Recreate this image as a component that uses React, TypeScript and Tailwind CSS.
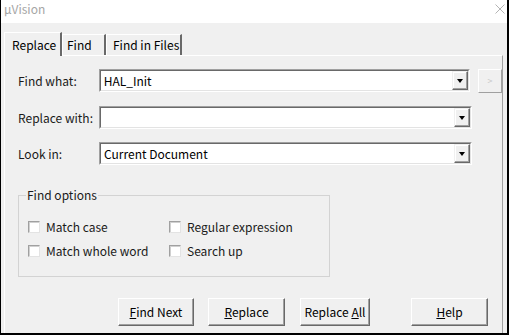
import React from 'react';

const font = "font-['Noto_Sans_CJK_SC','Microsoft_YaHei',sans-serif]";

const Arrow = () => (
  <div className="flex h-full w-[16px] items-center justify-center border border-t-[#f0f0f0] border-l-[#f0f0f0] border-r-[#696969] border-b-[#696969] bg-[#f0f0f0] shadow-[inset_-1px_-1px_0_#a0a0a0,inset_1px_1px_0_#ffffff]">
    <div className="h-0 w-0 border-l-[3px] border-r-[3px] border-t-[4px] border-l-transparent border-r-transparent border-t-black" />
  </div>
);

const Combo = ({ value }: { value?: string }) => (
  <div className="flex h-[23px] w-[373px] border border-t-[#a0a0a0] border-l-[#a0a0a0] border-r-white border-b-white">
    <div className="flex flex-1 border border-t-[#696969] border-l-[#696969] border-r-[#e3e3e3] border-b-[#e3e3e3] bg-white">
      <span className="flex-1 pl-[3px] text-[12px] leading-[19px] text-black">{value}</span>
      <Arrow />
    </div>
  </div>
);

const Row = ({ label, value, extra }: { label: string; value?: string; extra?: boolean }) => (
  <div className="flex items-start">
    <div className="w-[81px] text-[12px] leading-[23px] text-[#1a1a1a]">{label}</div>
    <Combo value={value} />
    {extra && (
      <div className="ml-[8px] flex h-[24px] w-[24px] items-center justify-center border border-t-white border-l-white border-r-[#a0a0a0] border-b-[#a0a0a0] text-[9px] text-[#c8c8c8]">
        &gt;
      </div>
    )}
  </div>
);

const Check = ({ label }: { label: string }) => (
  <div className="flex items-center gap-[6px]">
    <div className="h-[12px] w-[12px] border border-t-[#a0a0a0] border-l-[#a0a0a0] border-r-[#e3e3e3] border-b-[#e3e3e3] bg-white shadow-[inset_1px_1px_0_#d0d0d0]" />
    <span className="text-[12px] leading-[14px] text-[#1a1a1a]">{label}</span>
  </div>
);

const Btn = ({ children, w }: { children: React.ReactNode; w: string }) => (
  <div className={`flex h-[28px] ${w} items-center justify-center border border-t-white border-l-white border-r-[#696969] border-b-[#696969] shadow-[inset_-1px_-1px_0_#a0a0a0] text-[12px] text-black`}>
    {children}
  </div>
);

export default function App() {
  return (
    <div className={`flex h-[335px] w-[509px] flex-col border-b-2 border-l border-r-2 border-black bg-[#f0f0f0] ${font}`}>
      {/* Title bar */}
      <div className="flex h-[23px] items-start justify-between bg-white pl-[3px] pr-[2px]">
        <span className="pt-[1px] text-[12px] leading-[16px] text-[#a6a6a6]">µVision</span>
        <svg width="10" height="10" viewBox="0 0 10 10" className="mt-[4px]">
          <path d="M0.5 0.5 L9.5 9.5 M9.5 0.5 L0.5 9.5" stroke="#b4b4b4" strokeWidth="1" fill="none" />
        </svg>
      </div>

      {/* Tabs */}
      <div className="flex h-[32px] items-end pl-[3px]">
        <div className="relative z-10 -mb-px flex h-[24px] w-[58px] items-center border-l border-t border-r-2 border-l-white border-t-white border-r-[#696969] bg-[#f0f0f0] pl-[7px] text-[12px] text-black">
          Replace
        </div>
        <div className="flex h-[21px] w-[44px] items-center border-l border-t border-r-2 border-l-white border-t-white border-r-[#696969] pl-[4px] text-[12px] text-black">
          Find
        </div>
        <div className="flex h-[21px] w-[76px] items-center border-l border-t border-r-2 border-l-white border-t-white border-r-[#696969] pl-[6px] text-[12px] text-black">
          Find in Files
        </div>
      </div>

      {/* Panel */}
      <div className="ml-[3px] mr-[4px] flex flex-1 flex-col border-l border-t border-r border-l-white border-t-white border-r-[#a0a0a0] pl-[13px] pt-[13px]">
        <Row label="Find what:" value="HAL_Init" extra />
        <div className="mt-[13px]">
          <Row label="Replace with:" />
        </div>
        <div className="mt-[13px]">
          <Row label="Look in:" value="Current Document" />
        </div>

        {/* Group box */}
        <div className="relative mt-[30px] h-[82px] w-[312px] border border-[#d3d3d3] pl-[9px] pt-[24px]">
          <span className="absolute left-[7px] top-[-9px] bg-[#f0f0f0] px-[1px] text-[12px] leading-[16px] text-[#1a1a1a]">
            Find options
          </span>
          <div className="grid grid-cols-[141px_1fr] gap-y-[10px]">
            <Check label="Match case" />
            <Check label="Regular expression" />
            <Check label="Match whole word" />
            <Check label="Search up" />
          </div>
        </div>

        {/* Buttons */}
        <div className="mt-[21px] flex pl-[100px]">
          <Btn w="w-[76px]">
            <span><span className="underline">F</span>ind Next</span>
          </Btn>
          <div className="ml-[14px]">
            <Btn w="w-[77px]">
              <span><span className="underline">R</span>eplace</span>
            </Btn>
          </div>
          <div className="ml-[15px]">
            <Btn w="w-[70px]">
              <span>Replace <span className="underline">A</span>ll</span>
            </Btn>
          </div>
          <div className="ml-[41px]">
            <Btn w="w-[77px]">
              <span><span className="underline">H</span>elp</span>
            </Btn>
          </div>
        </div>
      </div>
    </div>
  );
}
